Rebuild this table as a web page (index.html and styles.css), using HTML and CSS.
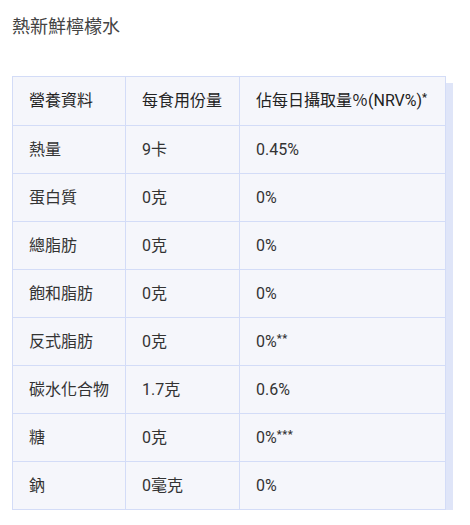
FILE: index.html
```html
<!DOCTYPE html>
<html lang="zh-Hant">
<head>
<meta charset="utf-8">
<link rel="stylesheet" href="styles.css">
</head>
<body>
<h1 class="title">熱新鮮檸檬水</h1>
<div class="wrap">
<table class="nutri">
<colgroup><col class="c1"><col class="c2"><col class="c3"></colgroup>
<thead>
<tr><th>營養資料</th><th>每食用份量</th><th>佔每日攝取量％(NRV%)<sup>*</sup></th></tr>
</thead>
<tbody>
<tr><td>熱量</td><td>9卡</td><td>0.45%</td></tr>
<tr><td>蛋白質</td><td>0克</td><td>0%</td></tr>
<tr><td>總脂肪</td><td>0克</td><td>0%</td></tr>
<tr><td>飽和脂肪</td><td>0克</td><td>0%</td></tr>
<tr><td>反式脂肪</td><td>0克</td><td>0%<sup>**</sup></td></tr>
<tr><td>碳水化合物</td><td>1.7克</td><td>0.6%</td></tr>
<tr><td>糖</td><td>0克</td><td>0%<sup>***</sup></td></tr>
<tr><td>鈉</td><td>0毫克</td><td>0%</td></tr>
</tbody>
</table>
</div>
</body>
</html>
```
FILE: styles.css
```css
html, body { margin: 0; padding: 0; background: #fff; }
body {
  padding: 0 12px;
  font-family: Roboto, "Noto Sans CJK TC", sans-serif;
  color: #333;
}
.title {
  margin: 0;
  padding-top: 16px;
  font-size: 18px;
  font-weight: 400;
  line-height: 22px;
  color: #444;
}
.wrap { margin-top: 38px; }
.nutri {
  width: 434px;
  border-collapse: collapse;
  background: #f5f6fb;
  box-shadow: 7px 7px 0 #dfe5f8;
  font-size: 16px;
  line-height: 24px;
}
.c1 { width: 113px; }
.c2 { width: 114px; }
.nutri th, .nutri td {
  border: 1px solid #d3dcf7;
  padding: 0 16px;
  text-align: left;
  font-weight: 400;
  height: 47px;
  color: #333;
  white-space: nowrap;
}
.nutri th { height: 48px; color: #222; }
sup { font-size: 11px; vertical-align: 5px; line-height: 0; font-weight: 700; letter-spacing: 0.5px; }
```
